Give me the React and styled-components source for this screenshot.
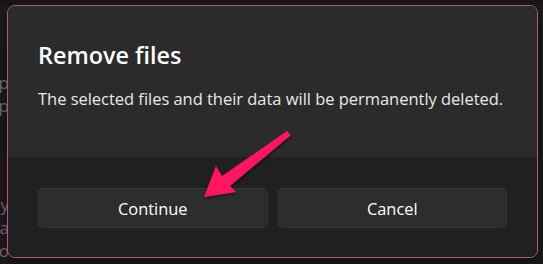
import React from "react";
import styled, { createGlobalStyle } from "styled-components";

const Global = createGlobalStyle`
  html, body { margin: 0; padding: 0; background: #1a1b1d; }
  body { font-family: "Open Sans", "Noto Sans", sans-serif; }
`;

const Screen = styled.div`
  position: relative;
  width: 543px;
  height: 264px;
  overflow: hidden;
  background: #1b1b1d;
  display: flex;
  flex-direction: column;
`;

const TopStrip = styled.div`
  height: 5px;
  background: #16181a;
  flex: none;
`;

const Backdrop = styled.div`
  flex: 1;
  display: flex;
`;

const SideColumn = styled.div`
  width: 9px;
  display: flex;
  flex-direction: column;
`;

const SidePanel = styled.div`
  height: ${(p) => p.$h}px;
  flex: ${(p) => (p.$h ? "none" : 1)};
  background: ${(p) => p.$bg};
  overflow: hidden;
  padding-top: ${(p) => p.$pt}px;
  box-sizing: border-box;
  display: flex;
  flex-direction: column;
  align-items: flex-end;
`;

const SideLine = styled.div`
  white-space: nowrap;
  font-size: 17px;
  line-height: 23px;
  color: #7d7a7e;
`;

const Dialog = styled.div`
  position: absolute;
  left: 7px;
  top: 5px;
  width: 531px;
  height: 253px;
  box-sizing: border-box;
  border: 1px solid #b2587f;
  border-radius: 8px;
  overflow: hidden;
  display: flex;
  flex-direction: column;
  box-shadow: 0 8px 24px rgba(0, 0, 0, 0.5);
`;

const Content = styled.div`
  height: 151px;
  flex: none;
  background: #2b2b2b;
  padding: 33px 24px 0 30px;
  box-sizing: border-box;
`;

const Title = styled.h1`
  margin: 0;
  font-size: 23.4px;
  line-height: 32px;
  font-weight: 600;
  color: #ffffff;
  white-space: nowrap;
`;

const Body = styled.p`
  margin: 17px 0 0 0;
  font-size: 16.5px;
  line-height: 22px;
  color: #e8e8e8;
  white-space: nowrap;
  letter-spacing: -0.03px;
`;

const Footer = styled.div`
  flex: 1;
  background: #202020;
  padding: 31px 30px 0 30px;
  display: grid;
  grid-template-columns: 1fr 1fr;
  column-gap: 10px;
  align-items: start;
`;

const Button = styled.button`
  height: 40px;
  border: 1px solid #333333;
  border-top-color: #383838;
  border-radius: 5px;
  background: #2d2d2d;
  color: #ffffff;
  font-family: "Open Sans", "Noto Sans", sans-serif;
  font-size: 16.4px;
  padding: 0;
  cursor: pointer;
`;

const ArrowLayer = styled.svg`
  position: absolute;
  left: 0;
  top: 0;
  width: 543px;
  height: 264px;
  pointer-events: none;
`;

export default function App() {
  return (
    <>
      <Global />
      <Screen>
        <TopStrip />
        <Backdrop>
          <SideColumn>
            <SidePanel $h={152} $bg="#1c1c1e" $pt={66}>
              <SideLine>Setup</SideLine>
              <SideLine>Help</SideLine>
            </SidePanel>
            <SidePanel $bg="#231a21" $pt={36}>
              <SideLine>Display</SideLine>
              <SideLine>Data</SideLine>
              <SideLine>Info</SideLine>
            </SidePanel>
          </SideColumn>
        </Backdrop>
        <Dialog role="dialog" aria-labelledby="dlg-title">
          <Content>
            <Title id="dlg-title">Remove files</Title>
            <Body>The selected files and their data will be permanently deleted.</Body>
          </Content>
          <Footer>
            <Button>Continue</Button>
            <Button>Cancel</Button>
          </Footer>
        </Dialog>
        <ArrowLayer viewBox="0 0 543 264">
          <defs>
            <filter id="sh" x="-20%" y="-20%" width="140%" height="140%">
              <feDropShadow dx="1" dy="1.5" stdDeviation="1.5" floodColor="#000" floodOpacity="0.45" />
            </filter>
          </defs>
          <polygon
            points="204,197 216,166 222,176 287,131 291,135 230,186 236,192"
            fill="#ff1560"
            filter="url(#sh)"
          />
        </ArrowLayer>
      </Screen>
    </>
  );
}
